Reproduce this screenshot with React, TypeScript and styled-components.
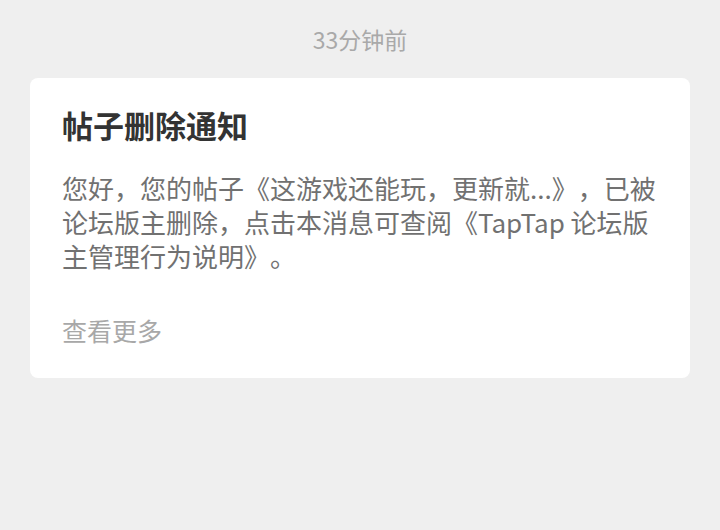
import React from 'react'
import styled, { createGlobalStyle } from 'styled-components'

const GlobalStyle = createGlobalStyle`
  html, body {
    margin: 0;
    padding: 0;
    background: #efefef;
    font-family: 'Noto Sans CJK SC', 'Noto Sans', sans-serif;
  }
`

const Page = styled.div`
  display: flex;
  flex-direction: column;
  align-items: center;
  min-height: 530px;
  padding: 23px 30px 0 30px;
  box-sizing: border-box;
`

const Time = styled.div`
  font-size: 23px;
  line-height: 32px;
  color: #a9a9a9;
`

const Card = styled.div`
  align-self: stretch;
  margin-top: 23px;
  padding: 27px 32px 31px 32px;
  background: #ffffff;
  border-radius: 8px;
`

const Title = styled.div`
  font-size: 31px;
  line-height: 40px;
  font-weight: 700;
  color: #333333;
`

const Body = styled.div`
  margin-top: 26px;
  font-size: 26px;
  line-height: 34px;
  color: #717171;
  text-spacing-trim: space-all;
`

const More = styled.div`
  margin-top: 40px;
  font-size: 25px;
  line-height: 34px;
  color: #a8a8a8;
`

export default function App() {
  return (
    <>
      <GlobalStyle />
      <Page>
        <Time>33分钟前</Time>
        <Card>
          <Title>帖子删除通知</Title>
          <Body>
            您好，您的帖子《这游戏还能玩，更新就...》，已被论坛版主删除，点击本消息可查阅《TapTap 论坛版主管理行为说明》。
          </Body>
          <More>查看更多</More>
        </Card>
      </Page>
    </>
  )
}
